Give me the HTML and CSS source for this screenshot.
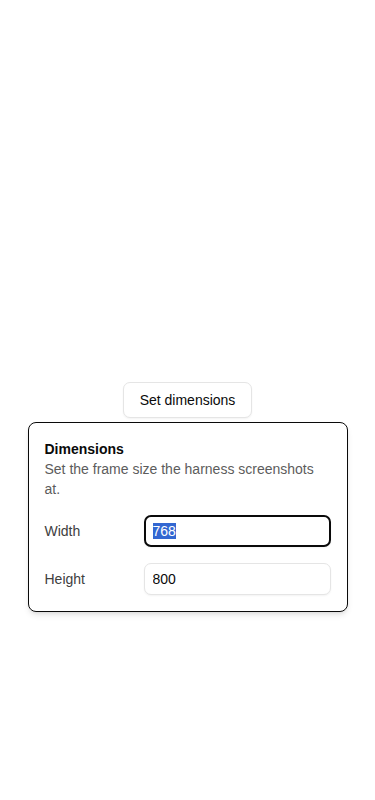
FILE: index.html
```html
<!DOCTYPE html>
<html lang="en">
<head>
  <meta charset="UTF-8">
  <meta name="viewport" content="width=device-width, initial-scale=1.0">
  <title>Dimensions</title>
  <link rel="stylesheet" href="styles.css">
</head>
<body>
  <div class="stage">
    <div class="popover-anchor">
      <button class="trigger" type="button">Set dimensions</button>

      <div class="popover">
        <div class="popover-header">
          <h4 class="popover-title">Dimensions</h4>
          <p class="popover-desc">Set the frame size the harness screenshots at.</p>
        </div>
        <div class="fields">
          <div class="field">
            <label for="width">Width</label>
            <input id="width" class="input" value="768">
          </div>
          <div class="field">
            <label for="height">Height</label>
            <input id="height" class="input" value="800">
          </div>
        </div>
      </div>
    </div>
  </div>
  <script>
    const widthInput = document.getElementById('width');
    widthInput.focus();
    widthInput.select();
  </script>
</body>
</html>
```

FILE: styles.css
```css
* {
  margin: 0;
  padding: 0;
  box-sizing: border-box;
}

body {
  font-family: "Liberation Sans", Arial, sans-serif;
  font-size: 14px;
  color: #0a0a0a;
  background: #fff;
}

.stage {
  min-height: 100vh;
  display: flex;
  align-items: center;
  justify-content: center;
}

.popover-anchor {
  position: relative;
}

.trigger {
  height: 36px;
  padding: 0 16px;
  font-family: inherit;
  font-size: 14px;
  color: #0a0a0a;
  background: #fff;
  border: 1px solid #e5e5e5;
  border-radius: 7px;
  box-shadow: 0 1px 2px rgba(0, 0, 0, 0.05);
}

.popover {
  position: absolute;
  top: calc(100% + 4px);
  left: 50%;
  transform: translateX(-50%);
  width: 320px;
  padding: 16px;
  background: #fff;
  border: 1px solid #0a0a0a;
  border-radius: 8px;
  box-shadow: 0 4px 6px -1px rgba(0, 0, 0, 0.1), 0 2px 4px -2px rgba(0, 0, 0, 0.1);
  display: flex;
  flex-direction: column;
  gap: 16px;
}

.popover-title {
  font-size: 14px;
  font-weight: bold;
  line-height: 20px;
}

.popover-desc {
  font-size: 14px;
  line-height: 20px;
  color: #5c5c5c;
}

.fields {
  display: flex;
  flex-direction: column;
  gap: 16px;
}

.field {
  display: grid;
  grid-template-columns: 83px minmax(0, 1fr);
  align-items: center;
  gap: 16px;
}

.field label {
  font-size: 14px;
  color: #404040;
}

.input {
  width: 100%;
  min-width: 0;
  height: 32px;
  padding: 0 8px;
  font-family: inherit;
  font-size: 14px;
  color: #0a0a0a;
  border: 1px solid #e5e5e5;
  border-radius: 7px;
  outline: none;
  box-shadow: 0 1px 2px rgba(0, 0, 0, 0.05);
}

.input:focus {
  border: 2px solid #0a0a0a;
  padding: 0 7px;
}

.input::selection {
  background: #3367d1;
  color: #fff;
}
```
